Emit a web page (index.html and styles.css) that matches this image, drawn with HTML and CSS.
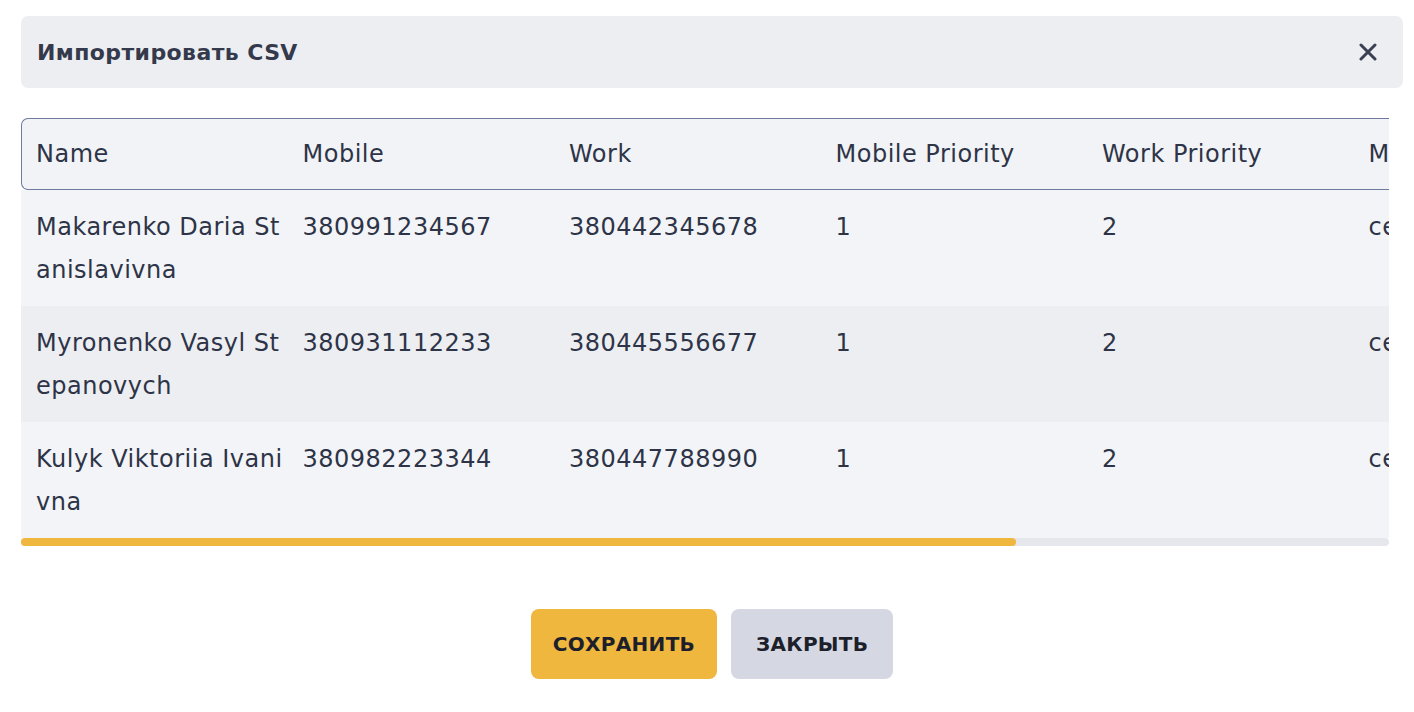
FILE: index.html
```html
<!DOCTYPE html>
<html lang="ru">
<head>
    <meta charset="UTF-8">
    <title>Импортировать CSV</title>
    <link rel="stylesheet" href="styles.css">
</head>
<body>
    <div class="modal">
        <div class="modal-header">
            <h2>Импортировать CSV</h2>
            <button class="close-btn" aria-label="close">
                <svg width="18" height="18" viewBox="0 0 18 18">
                    <path d="M2 2 L16 16 M16 2 L2 16" stroke="#3a4052" stroke-width="3" stroke-linecap="round"/>
                </svg>
            </button>
        </div>

        <div class="table-block">
            <div class="table-wrap">
                <table class="csv-table">
                    <colgroup>
                        <col class="col">
                        <col class="col">
                        <col class="col">
                        <col class="col">
                        <col class="col">
                        <col class="col-wide">
                        <col class="col-wide">
                    </colgroup>
                    <thead>
                        <tr>
                            <th>Name</th>
                            <th>Mobile</th>
                            <th>Work</th>
                            <th>Mobile Priority</th>
                            <th>Work Priority</th>
                            <th>Mail</th>
                            <th>Comment</th>
                        </tr>
                    </thead>
                    <tbody>
                        <tr>
                            <td class="name">Makarenko Daria Stanislavivna</td>
                            <td>380991234567</td>
                            <td>380442345678</td>
                            <td>1</td>
                            <td>2</td>
                            <td>central@mail.com</td>
                            <td></td>
                        </tr>
                        <tr>
                            <td class="name">Myronenko Vasyl Stepanovych</td>
                            <td>380931112233</td>
                            <td>380445556677</td>
                            <td>1</td>
                            <td>2</td>
                            <td>central@mail.com</td>
                            <td></td>
                        </tr>
                        <tr>
                            <td class="name">Kulyk Viktoriia Ivanivna</td>
                            <td>380982223344</td>
                            <td>380447788990</td>
                            <td>1</td>
                            <td>2</td>
                            <td>central@mail.com</td>
                            <td></td>
                        </tr>
                    </tbody>
                </table>
            </div>
            <div class="scrollbar">
                <div class="scrollbar-thumb"></div>
            </div>
        </div>

        <div class="buttons">
            <button class="btn btn-save">СОХРАНИТЬ</button>
            <button class="btn btn-close">ЗАКРЫТЬ</button>
        </div>
    </div>
</body>
</html>
```

FILE: styles.css
```css
body {
    margin: 0;
    padding: 16px 11px 0 21px;
    background: #ffffff;
    font-family: "DejaVu Sans", "Noto Sans", sans-serif;
    color: #2e3447;
}

.modal-header {
    display: flex;
    align-items: center;
    justify-content: space-between;
    height: 72px;
    padding: 0 26px 0 16px;
    background: #edeef2;
    border-radius: 7px;
    box-sizing: border-box;
}

.modal-header h2 {
    margin: 0;
    font-size: 22px;
    font-weight: bold;
    letter-spacing: 0.4px;
    color: #343a4b;
}

.close-btn {
    border: none;
    background: none;
    padding: 0;
    display: flex;
    cursor: pointer;
}

.table-block {
    margin: 30px 14px 0 0;
}

.table-wrap {
    overflow: hidden;
}

.scrollbar {
    height: 8px;
    background: #e6e7ec;
    border-radius: 4px;
}

.scrollbar-thumb {
    width: 72.7%;
    height: 100%;
    background: #f0b73f;
    border-radius: 4px;
}

.csv-table {
    width: 1880px;
    table-layout: fixed;
    border-collapse: separate;
    border-spacing: 0;
    font-size: 24px;
    letter-spacing: 0.5px;
    line-height: 43px;
}

.col {
    width: 266.5px;
}

.col-wide {
    width: 273.75px;
}

.csv-table th,
.csv-table td {
    padding: 0 0 0 15px;
    text-align: left;
    vertical-align: top;
    white-space: nowrap;
    box-sizing: border-box;
}

.csv-table th {
    font-weight: 400;
    height: 72px;
    padding-top: 14px;
    background: #f2f3f7;
    border-top: 1px solid #6f7a9e;
    border-bottom: 1px solid #6f7a9e;
}

.csv-table th:first-child {
    border-left: 1px solid #6f7a9e;
    border-radius: 7px 0 0 7px;
    padding-left: 14px;
}

.csv-table td {
    height: 116px;
    padding-top: 16px;
    background: #f3f4f7;
}

.csv-table td.name {
    white-space: normal;
    word-break: break-all;
}

.csv-table tbody tr:nth-child(2) td {
    background: #edeef2;
}

.buttons {
    display: flex;
    justify-content: center;
    gap: 14px;
    margin-top: 63px;
}

.btn {
    min-width: 162px;
    height: 70px;
    padding: 0 22px;
    border: none;
    border-radius: 8px;
    font-family: "DejaVu Sans", sans-serif;
    font-size: 20px;
    font-weight: bold;
    letter-spacing: 0.3px;
    color: #1d1f2b;
    cursor: pointer;
}

.btn-save {
    background: #f0b73f;
}

.btn-close {
    background: #d5d8e2;
}
```
